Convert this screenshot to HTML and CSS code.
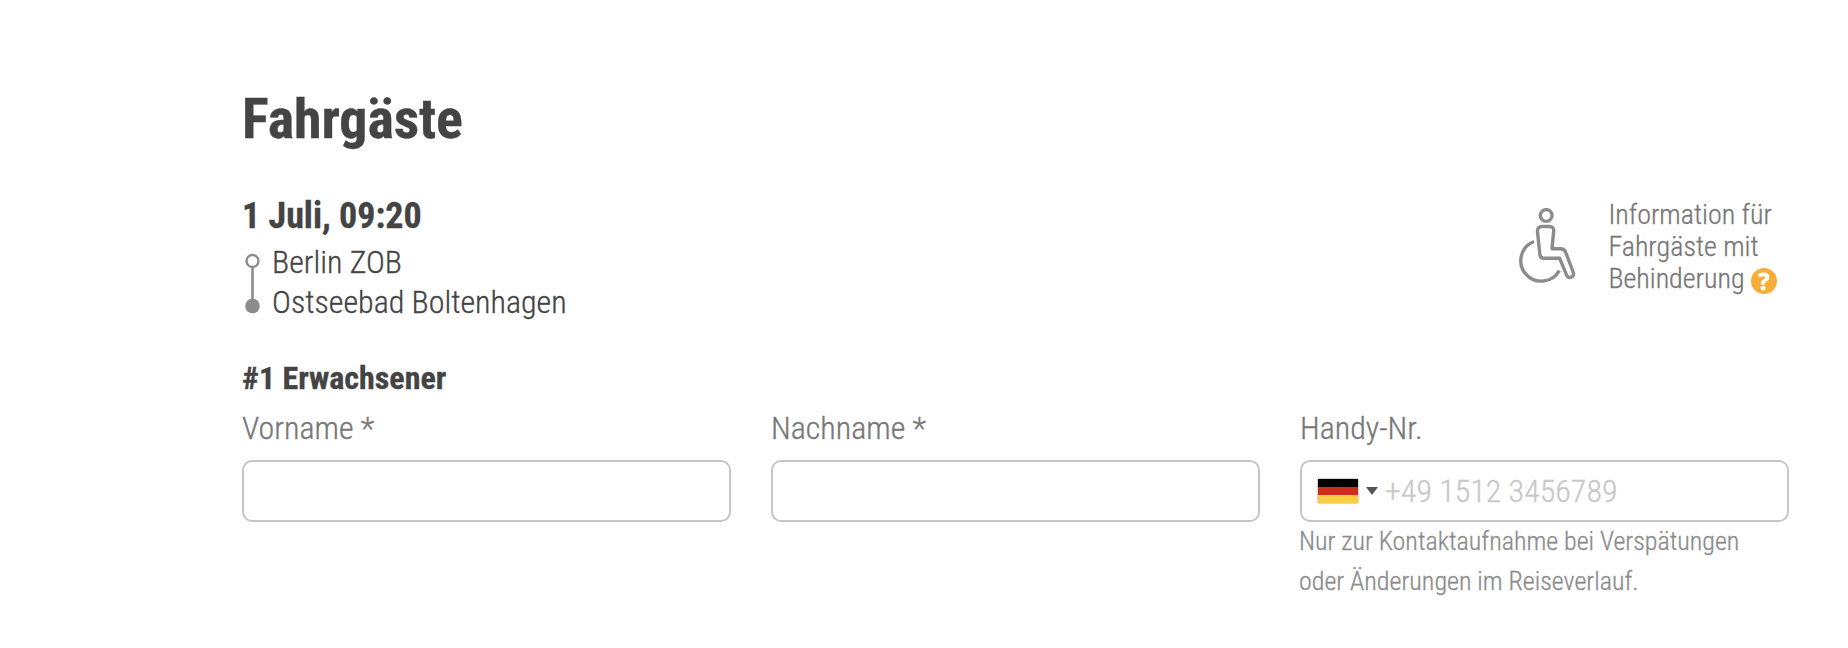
FILE: index.html
```html
<!DOCTYPE html>
<html lang="de">
<head>
<meta charset="utf-8">
<title>Fahrgäste</title>
<link rel="stylesheet" href="styles.css">
</head>
<body>
<main class="page">
  <h1 class="title">Fahrgäste</h1>
  <section class="trip">
    <div class="trip-info">
      <h2 class="date">1 Juli, 09:20</h2>
      <div class="route">
        <svg class="route-line" width="16" height="80" viewBox="0 0 16 80">
          <path d="M8.500 25V60" stroke="#8c8c8c" stroke-width="2.6"/>
          <circle cx="8.500" cy="19" r="6" fill="#fff" stroke="#8c8c8c" stroke-width="2.4"/>
          <circle cx="8.500" cy="64" r="7.300" fill="#8c8c8c"/>
        </svg>
        <div class="stops">
          <div>Berlin ZOB</div>
          <div>Ostseebad Boltenhagen</div>
        </div>
      </div>
    </div>
    <aside class="access">
      <svg class="wheelchair" width="60" height="78" viewBox="0 0 60 78" fill="none" stroke="#8c8c8c" stroke-width="3.4" stroke-linejoin="round">
        <circle cx="28.2" cy="7.500" r="5.900"/>
        <path d="M24 18.500h7.500q4.500 0 4.200 4.300L34 40.700h8.500q4 0 5.300 3.800l7.500 20q1 3.500-2 4.700t-4.700-2L41.700 50.300H26.500q-4.300 0-4.700-4.300l-2.300-22.300q-.3-5.200 4.500-5.200z"/>
        <path d="M16 33.500A20.500 20.500 0 1 0 41.300 62.500"/>
      </svg>
      <p class="access-text">Information für<br>Fahrgäste mit<br>Behinderung <span class="help">?</span></p>
    </aside>
  </section>
  <h3 class="passenger">#1 Erwachsener</h3>
  <form class="fields">
    <div class="field">
      <label class="label" for="first">Vorname *</label>
      <input class="input" id="first" type="text">
    </div>
    <div class="field">
      <label class="label" for="last">Nachname *</label>
      <input class="input" id="last" type="text">
    </div>
    <div class="field">
      <label class="label" for="phone">Handy-Nr.</label>
      <div class="input phone">
        <span class="flag"></span>
        <span class="caret"></span>
        <input class="phone-input" id="phone" type="tel" placeholder="+49 1512 3456789">
      </div>
      <p class="hint">Nur zur Kontaktaufnahme bei Verspätungen<br>oder Änderungen im Reiseverlauf.</p>
    </div>
  </form>
</main>
</body>
</html>
```
FILE: styles.css
```css
* { box-sizing: border-box; margin: 0; padding: 0; }
body {
  background: #fff;
  color: #444;
  font-family: "Roboto Condensed", Roboto, sans-serif;
  font-stretch: 75%;
  font-size: 32px;
  font-weight: 300;
  line-height: 40px;
  -webkit-text-stroke: 0.3px;
}
.page { padding: 87px 59px 0 242px; }
.title { font-size: 56px; line-height: 64px; font-weight: 700; letter-spacing: -0.1px; }
.trip { display: flex; justify-content: space-between; margin-top: 43px; }
.date { font-size: 36px; line-height: 44px; font-weight: 700; }
.route { display: flex; gap: 12px; margin: 4px 0 0 2px; }
.access { display: flex; padding: 5px 12px 0 0; color: #777; }
.wheelchair { margin: 9px 30px 0 0; }
.access-text { font-size: 28px; line-height: 32px; white-space: nowrap; }
.help {
  display: inline-block;
  width: 26px;
  height: 26px;
  border-radius: 50%;
  background: #f7ae38;
  color: #fff;
  font: 700 23px/26px "Open Sans", sans-serif;
  -webkit-text-stroke: 0.8px;
  text-align: center;
  vertical-align: -5px;
  position: relative;
  top: -3px;
}
.passenger { margin-top: 36px; font-size: 32px; font-weight: 700; }
.fields { display: grid; grid-template-columns: repeat(3, 489px); gap: 40px; margin-top: 10px; }
.label { display: block; color: #777; margin-bottom: 12px; }
.input {
  display: block;
  width: 100%;
  height: 62px;
  border: 2px solid #c6c6c6;
  border-radius: 10px;
  background: #fff;
}
.phone { display: flex; align-items: center; padding-left: 16px; }
.flag {
  width: 40px;
  height: 24px;
  background: linear-gradient(#000 8px, #d02b1d 8px 16px, #f9ce46 16px);
  box-shadow: 0 0 2px #888;
}
.caret {
  margin: 0 7px 0 8px;
  border: 6px solid transparent;
  border-top: 8px solid #555;
  border-bottom: 0;
}
.phone-input {
  width: 380px;
  border: 0;
  outline: 0;
  background: none;
  font: inherit;
}
.phone-input::placeholder { color: #c8c8c8; opacity: 1; -webkit-text-stroke: 0.3px #c8c8c8; }
.hint { margin: -1px 0 0 -1px; color: #8c8c8c; font-size: 26px; }
```
